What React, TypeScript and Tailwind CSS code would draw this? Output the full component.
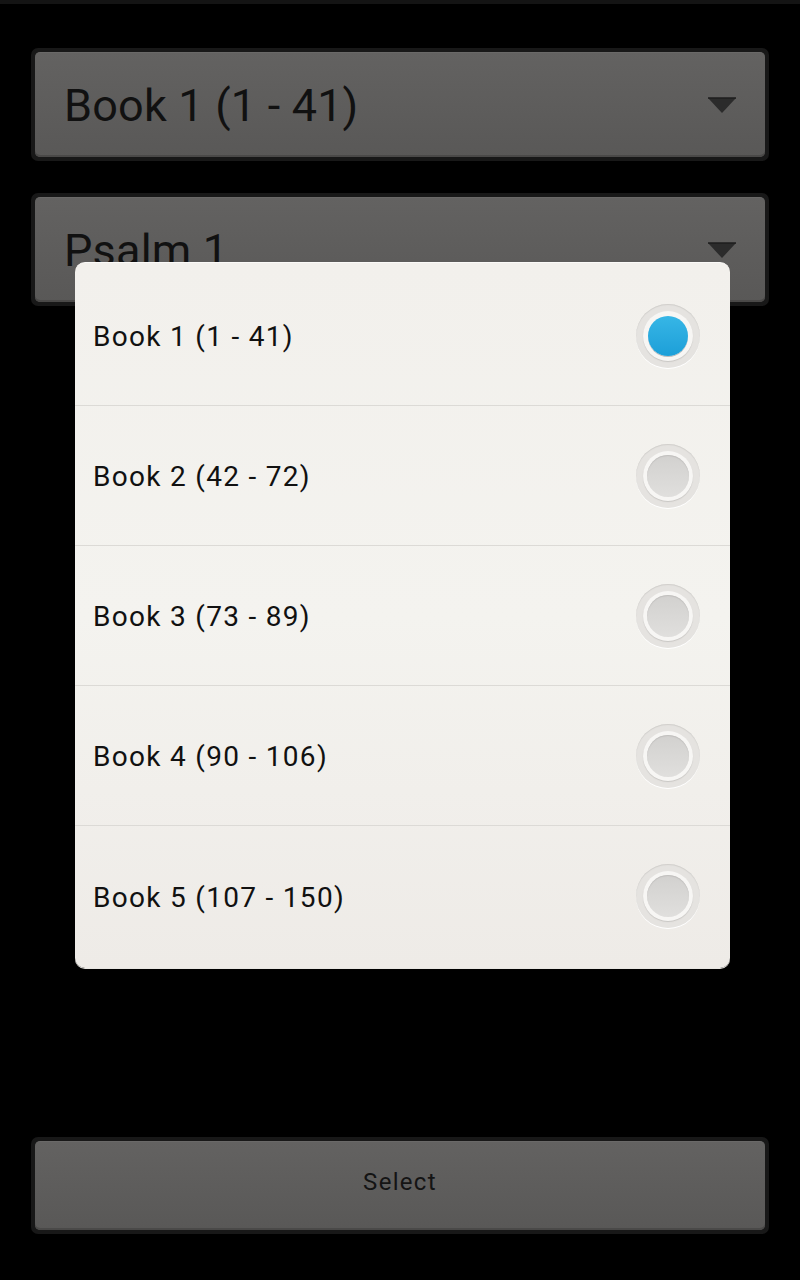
import React from "react";

const books = [
  "Book 1 (1 - 41)",
  "Book 2 (42 - 72)",
  "Book 3 (73 - 89)",
  "Book 4 (90 - 106)",
  "Book 5 (107 - 150)",
];

function Triangle() {
  return (
    <svg width="30" height="17" viewBox="0 0 30 17" className="shrink-0">
      <polygon points="1,1 29,1 15,16" fill="#2b2b2b" />
      <line x1="1" y1="1" x2="29" y2="1" stroke="#1e1e1e" strokeWidth="1.5" />
    </svg>
  );
}

function Spinner({ label }: { label: string }) {
  return (
    <div className="rounded-[7px] bg-[#181818] p-[4px]">
      <div className="flex h-[105px] items-center justify-between rounded-[5px] border-t border-[#6a6968] bg-gradient-to-b from-[#636261] to-[#595857] pl-[29px] pr-[28px] shadow-[inset_0_-2px_0_#4a4948]">
        <span className="pt-[1px] text-[45px] leading-none tracking-[0.2px] text-[#111]">
          {label}
        </span>
        <Triangle />
      </div>
    </div>
  );
}

function Radio({ checked }: { checked: boolean }) {
  return (
    <div className="flex h-[64px] w-[64px] items-center justify-center rounded-full bg-[#e5e3e0] shadow-[0_1px_0_#ffffff,inset_0_1px_1px_#d0cecb]">
      <div className="flex h-[50px] w-[50px] items-center justify-center rounded-full bg-[#f7f6f4] shadow-[0_1px_1px_#c9c7c4]">
        {checked ? (
          <div className="h-[40px] w-[40px] rounded-full bg-gradient-to-b from-[#36b6e6] to-[#1c9fd8] shadow-[0_1px_0_#bbb]" />
        ) : (
          <div className="h-[42px] w-[42px] rounded-full bg-gradient-to-b from-[#d2d1cf] to-[#e0dfdd] shadow-[inset_0_1px_1px_#c0bfbd]" />
        )}
      </div>
    </div>
  );
}

export default function App() {
  return (
    <div className="relative h-[1280px] w-[800px] overflow-hidden bg-black" style={{ fontFamily: "Roboto, sans-serif" }}>
      <div className="h-[4px] bg-[#141414]" />
      <div className="flex h-[1276px] flex-col px-[31px] pt-[44px] pb-[46px]">
        <Spinner label="Book 1 (1 - 41)" />
        <div className="h-[32px]" />
        <Spinner label="Psalm 1" />
        <div className="flex-1" />
        <div className="rounded-[7px] bg-[#181818] p-[4px]">
          <div className="flex h-[89px] items-center justify-center rounded-[5px] border-t border-[#6a6968] bg-gradient-to-b from-[#636261] to-[#595857] pb-[8px] shadow-[inset_0_-2px_0_#4a4948]">
            <span className="text-[24px] leading-none tracking-[1.3px] text-[#141414]">Select</span>
          </div>
        </div>
      </div>

      <div className="absolute left-[75px] top-[262px] w-[655px] overflow-hidden rounded-[10px] border-t border-[#fbfaf8] bg-gradient-to-b from-[#f2f0ec] via-[#f4f3ef] to-[#eeebe7] pt-[3px] shadow-[0_1px_0_#e8e6e2]">
        {books.map((b, i) => (
          <div
            key={b}
            className={`flex h-[140px] items-center justify-between pl-[18px] pr-[30px] ${i < books.length - 1 ? "border-b border-[#dcdad6]" : ""}`}
          >
            <span className="pt-[3px] text-[28px] leading-none tracking-[1.3px] text-[#111]">{b}</span>
            <Radio checked={i === 0} />
          </div>
        ))}
        <div className="h-[2px]" />
      </div>
    </div>
  );
}
